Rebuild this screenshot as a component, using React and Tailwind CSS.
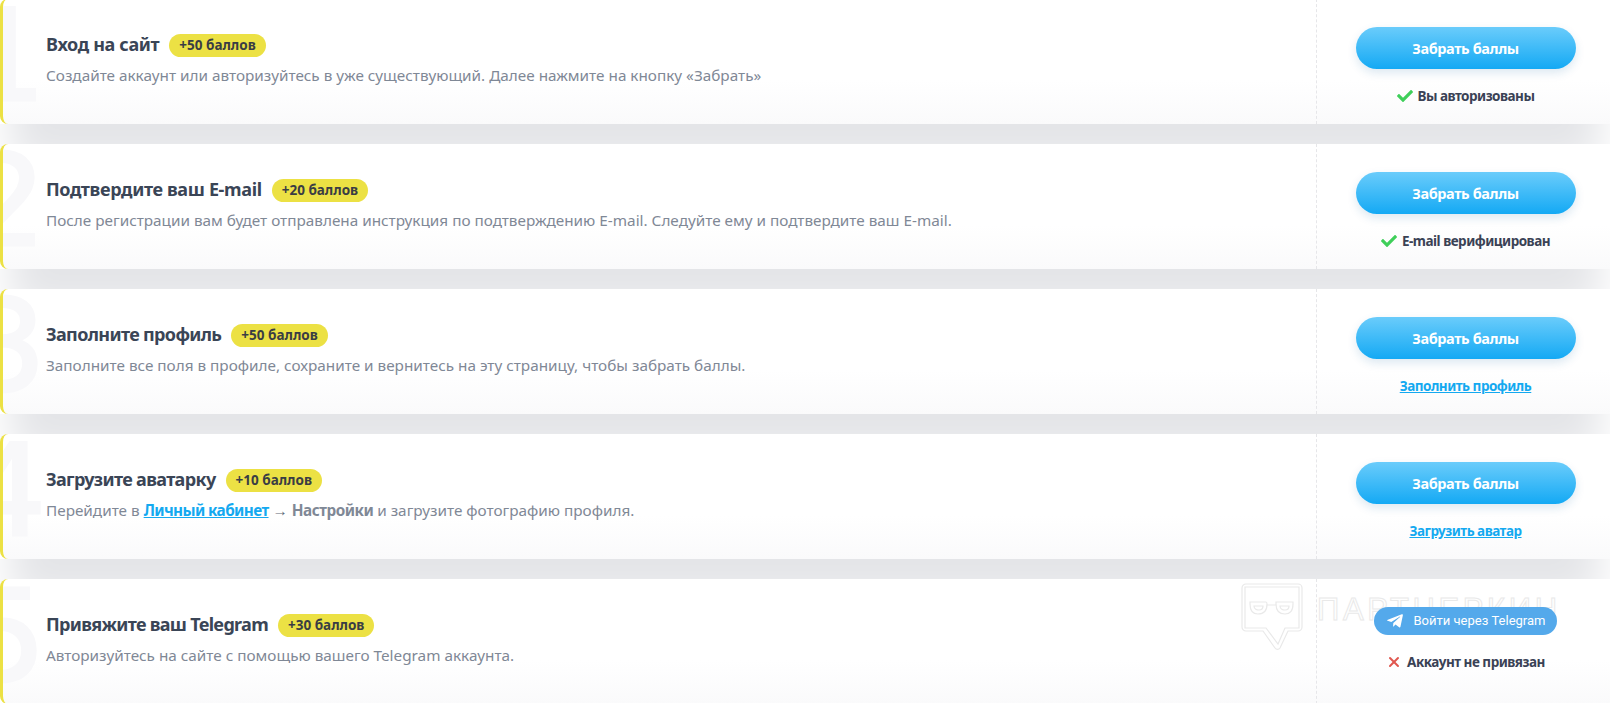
import React from "react";
import { FaCheck, FaTelegramPlane } from "react-icons/fa";
import { X } from "lucide-react";

const tasks = [
  {
    num: "1",
    title: "Вход на сайт",
    titleClass: "tracking-[-0.35px]",
    points: "+50 баллов",
    text: "Создайте аккаунт или авторизуйтесь в уже существующий. Далее нажмите на кнопку «Забрать»",
    status: "Вы авторизованы",
  },
  {
    num: "2",
    title: "Подтвердите ваш E-mail",
    titleClass: "tracking-[-0.35px]",
    points: "+20 баллов",
    text: "После регистрации вам будет отправлена инструкция по подтверждению E-mail. Следуйте ему и подтвердите ваш E-mail.",
    status: "E-mail верифицирован",
  },
  {
    num: "3",
    title: "Заполните профиль",
    titleClass: "tracking-[-0.65px]",
    points: "+50 баллов",
    text: "Заполните все поля в профиле, сохраните и вернитесь на эту страницу, чтобы забрать баллы.",
    link: "Заполнить профиль",
  },
  {
    num: "4",
    title: "Загрузите аватарку",
    titleClass: "tracking-[-0.65px]",
    points: "+10 баллов",
    text: (
      <>
        Перейдите в{" "}
        <a href="#" className="font-bold tracking-[-0.6px] text-[#14a9f0] underline">
          Личный кабинет
        </a>{" "}
        <span className="font-['Liberation_Sans',sans-serif] text-[#5f6876]">→</span>{" "}
        <b className="font-bold tracking-[-0.5px]">Настройки</b> и загрузите фотографию профиля.
      </>
    ),
    link: "Загрузить аватар",
  },
  {
    num: "5",
    title: "Привяжите ваш Telegram",
    titleClass: "tracking-[-0.7px]",
    points: "+30 баллов",
    text: "Авторизуйтесь на сайте с помощью вашего Telegram аккаунта.",
    telegram: true,
  },
];

const Watermark = () => (
  <div className="absolute left-[1238px] top-[4px] flex items-start gap-[14px]">
    <svg width="62" height="68" viewBox="0 0 62 68" fill="none" stroke="#e9e9e9" strokeWidth="1.2">
      <path d="M5 1h52a4 4 0 0 1 4 4v39a4 4 0 0 1-4 4H47L39 65a3 3 0 0 1-5 0L22 48H5a4 4 0 0 1-4-4V5a4 4 0 0 1 4-4z" />
      <path d="M4 4h54v41H44l-7 16-12-16H4z" />
      <path d="M9 19h16c1 0 1 1 1 2 0 7-3 10-9 10s-8-4-8-10v-2zM35 19h17v2c0 7-3 10-8 10s-9-3-9-10v-2zM26 22h9" />
      <path d="M13 23h9c0 3-2 4-4 4s-5-1-5-4zM39 23h9c0 3-2 4-4 4s-5-1-5-4z" />
    </svg>
    <span className="mt-[9px] font-['Liberation_Sans',sans-serif] text-[31px] leading-[36px] tracking-[3.6px] text-transparent [-webkit-text-stroke:1px_#e9e9e9]">
      ПАРТНЕРКИН
    </span>
  </div>
);

const TaskCard = ({ task }) => (
  <div className="relative mb-5 flex h-[125px] overflow-hidden rounded-l-[8px] border-l-[3px] border-[#ece144] bg-[linear-gradient(180deg,#ffffff_65%,#fafafb_100%)]">
    <span className="absolute left-[-37px] top-[-17px] font-['DejaVu_Sans',sans-serif] text-[126px] leading-[150px] text-[#f8f8fa] [-webkit-text-stroke:3px_#f8f8fa]">
      {task.num}
    </span>
    {task.telegram && <Watermark />}

    <div className="relative flex-1 pl-[43px] pt-[33px]">
      <div className="flex h-[24px] items-center">
        <h3 className={`text-[18px] font-bold leading-[24px] text-[#3a4556] ${task.titleClass}`}>{task.title}</h3>
        <span className="ml-[10px] mt-[2px] flex h-[23px] items-center rounded-full bg-[#ece144] px-[10px] text-[13.5px] font-bold text-[#3a3d44]">
          {task.points}
        </span>
      </div>
      <p className="mt-[7px] text-[15.3px] leading-[24px] text-[#7f8896]">{task.text}</p>
    </div>

    <div className="relative flex w-[294px] flex-col items-center border-l border-dashed border-[#e6e6e9] pl-[4px]">
      {task.telegram ? (
        <>
          <button className="mt-[28px] flex h-[28px] w-[183px] items-center justify-center gap-[10px] rounded-full bg-[#54a9eb] font-['Roboto',sans-serif] text-[13px] text-white">
            <FaTelegramPlane className="text-[18px]" />
            Войти через Telegram
          </button>
          <div className="mt-[17px] flex items-center gap-[5px] text-[13.5px] font-bold leading-[20px] tracking-[-0.5px] text-[#3a4255]">
            <X size={16} strokeWidth={3} color="#e0574f" />
            Аккаунт не привязан
          </div>
        </>
      ) : (
        <>
          <button className="mt-[28px] h-[42px] w-[220px] rounded-full bg-[linear-gradient(180deg,#6accfb_0%,#14a9f4_100%)] pt-px text-[14.5px] font-bold tracking-[-0.4px] text-white shadow-[0_4px_10px_rgba(20,100,160,0.15)]">
            Забрать баллы
          </button>
          {task.status ? (
            <div className="mt-[17px] flex items-center gap-[5px] text-[13.5px] font-bold leading-[20px] tracking-[-0.5px] text-[#3a4255]">
              <FaCheck className="text-[16px] text-[#3fcf5a]" />
              {task.status}
            </div>
          ) : (
            <a href="#" className="mt-[17px] text-[13.5px] font-bold leading-[20px] tracking-[-0.5px] text-[#14a9f0] underline">
              {task.link}
            </a>
          )}
        </>
      )}
    </div>
  </div>
);

export default function App() {
  return (
    <div className="h-[703px] overflow-hidden bg-white font-['Noto_Sans',sans-serif]">
      <div className="-mt-px">
        {tasks.map((task) => (
          <div key={task.num} className="relative shadow-[0_50px_40px_-10px_#e4e5e8]">
            <TaskCard task={task} />
          </div>
        ))}
      </div>
    </div>
  );
}
